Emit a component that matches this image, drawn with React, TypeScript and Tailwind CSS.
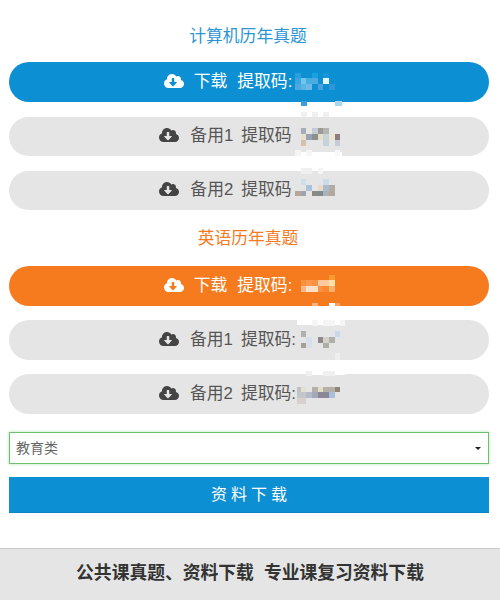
import { FaCloudDownloadAlt } from "react-icons/fa";

const font = { fontFamily: '"Liberation Sans", "Noto Sans CJK SC", sans-serif' };

// x, y, width, height, colour of each blurred block covering the codes
type Cell = [number, number, number, number, string];

const cells: Cell[] = [
    // blue row code
    [295, 73, 6, 5, "#2a9ddd"], [312, 73, 6, 5, "#18a0e0"], [323, 73, 6, 5, "#1597d8"],
    [295, 78, 6, 6, "#3aa5e0"], [301, 78, 5, 6, "#6fc5ee"], [306, 78, 6, 6, "#45aee3"], [312, 78, 6, 6, "#4eaadf"], [323, 78, 6, 6, "#e6f6fc"],
    [295, 84, 6, 6, "#4fa9e0"], [301, 84, 5, 6, "#5bb3e5"], [306, 84, 6, 6, "#6db9e6"], [318, 84, 5, 6, "#4aa0dc"], [329, 84, 6, 6, "#2f96d8"],
    [301, 101, 6, 5, "#3a9fde"], [335, 101, 7, 5, "#a8d8f0"],
    // spare 1
    [295, 113, 47, 4, "#ffffff"],
    [301, 112, 6, 5, "#f0f0f0"], [312, 112, 6, 5, "#f0f0f0"], [323, 112, 6, 5, "#f0f0f0"],
    [301, 128, 5, 6, "#a8adb5"], [312, 128, 6, 6, "#c3cbd3"], [318, 128, 5, 6, "#9a9a98"], [323, 128, 6, 6, "#b5b5b0"],
    [301, 134, 5, 6, "#e8dfcc"], [306, 134, 6, 6, "#95a3b5"], [312, 134, 6, 6, "#8e8e8e"], [318, 134, 5, 6, "#e5dfc8"], [323, 134, 6, 6, "#c5d3dd"], [329, 134, 6, 6, "#ece3d3"], [335, 134, 5, 6, "#8c7e80"],
    [301, 140, 5, 6, "#d3c3ae"], [323, 140, 6, 6, "#c5d3dd"], [335, 140, 5, 6, "#c5ccd5"],
    [295, 152, 47, 5, "#ffffff"],
    [295, 150, 6, 6, "#f5f5f5"], [306, 150, 6, 6, "#f5f5f5"], [335, 150, 5, 6, "#f8f8f8"],
    // spare 2
    [295, 168, 47, 3, "#ffffff"],
    [301, 168, 5, 6, "#f0f0f0"], [306, 168, 6, 6, "#f0f0f0"], [318, 168, 5, 6, "#f5f5f5"],
    [301, 179, 5, 6, "#cfdfea"], [323, 179, 6, 6, "#c8dcea"],
    [306, 185, 6, 6, "#abc3d8"], [318, 185, 5, 6, "#ead9c3"], [323, 185, 6, 6, "#a8bccd"], [329, 185, 6, 6, "#b3aba6"],
    [295, 191, 6, 5, "#b5a69a"], [301, 191, 5, 5, "#a3a3ad"], [312, 191, 6, 5, "#8a8a84"], [318, 191, 5, 5, "#7f8a8e"], [323, 191, 6, 5, "#a8b3bb"], [329, 191, 6, 5, "#b5a69e"],
    // orange row code
    [329, 275, 6, 5, "#f99a30"],
    [301, 280, 5, 6, "#f99040"], [306, 280, 6, 6, "#fa9a50"], [312, 280, 6, 6, "#fa9040"], [318, 280, 11, 6, "#fcc8a0"], [329, 280, 6, 6, "#fde0a8"],
    [301, 286, 5, 6, "#fbb88c"], [306, 286, 12, 6, "#fde0c8"], [318, 286, 5, 6, "#fa9040"], [323, 286, 6, 6, "#f98a30"], [329, 286, 6, 6, "#fbb070"],
    [312, 303, 6, 3, "#fbb080"], [329, 303, 6, 3, "#ffffff"], [335, 303, 5, 3, "#fba060"],
    // spare 1
    [297, 320, 48, 5, "#ffffff"],
    [312, 320, 6, 6, "#f5f5f5"], [323, 320, 12, 6, "#f5f5f5"], [340, 320, 5, 6, "#f5f5f5"],
    [301, 331, 5, 6, "#b0b0ae"], [335, 331, 5, 6, "#c8d8e8"],
    [306, 337, 6, 6, "#d5e0ea"], [318, 337, 5, 6, "#8f8890"], [323, 337, 6, 6, "#d5d0c8"], [329, 337, 6, 6, "#aeaeaa"],
    [301, 343, 5, 5, "#a89e96"], [306, 343, 6, 5, "#d5e0ea"], [323, 343, 6, 5, "#aeaea8"],
    // spare 2
    [335, 353, 5, 7, "#eeeeee"],
    [307, 372, 38, 3, "#ffffff"],
    [306, 371, 6, 5, "#f0f0f0"], [323, 371, 12, 5, "#f0f0f0"],
    [297, 387, 4, 5, "#c0c0c0"], [301, 387, 5, 5, "#e5e0d5"], [312, 387, 6, 5, "#b5b0a8"], [318, 387, 5, 5, "#e0ddc8"], [323, 387, 12, 5, "#b5b0a8"], [335, 387, 5, 5, "#8f8478"],
    [297, 392, 9, 6, "#c5c5cc"], [306, 392, 6, 6, "#b5bac8"], [312, 392, 6, 6, "#a5a8b8"], [318, 392, 11, 6, "#8a8898"], [329, 392, 6, 6, "#a8c0d8"],
    [297, 398, 9, 6, "#d8d0cc"],
];

function LinkRow({ label, colon, spacer, primary, short }: { label: string; colon?: boolean; spacer: string; primary?: string; short?: boolean }) {
    return (
        <a className={`flex items-center justify-center rounded-[20px] text-[16.8px] ${short ? "h-[39px]" : "h-10"} ${primary ?? "bg-[#e5e5e5] text-[#555]"}`}>
            <FaCloudDownloadAlt className={`mb-[3px] text-[20px] ${primary ? "mr-[10px]" : "mr-[11px] text-[#444]"}`} />
            <span className={`mb-px ${primary ? "mr-[10px]" : "mr-[8px]"}`}>{label}</span>
            <span className="mb-px">提取码{colon ? ":" : ""}</span>
            <span className={spacer} />
        </a>
    );
}

export default function App() {
    return (
        <div className="relative flex h-[600px] flex-col bg-white" style={font}>
            <div className="flex flex-col pl-[9px] pr-[11px]">
                <h2 className="mt-[26px] mb-[14px] pr-[2px] text-center text-[16.8px] leading-[22px] text-[#2b95d6]">计算机历年真题</h2>
                <div className="flex flex-col gap-[15px]">
                    <LinkRow label="下载" colon spacer="w-[42px]" primary="bg-[#0d8fd3] text-white" />
                    <LinkRow label="备用1" spacer="w-[47px]" short />
                    <LinkRow label="备用2" spacer="w-[47px]" short />
                </div>
                <h2 className="mt-[18px] mb-[16px] pr-[2px] text-center text-[16.8px] leading-[22px] text-[#f67b1f]">英语历年真题</h2>
                <div className="flex flex-col gap-[14px]">
                    <LinkRow label="下载" colon spacer="w-[42px]" primary="bg-[#f67b1f] text-white" />
                    <LinkRow label="备用1" colon spacer="w-[43px]" />
                    <LinkRow label="备用2" colon spacer="w-[43px]" />
                </div>
                <div className="mt-[18px] flex h-8 items-center justify-between border border-[#6cc26c] pl-[6px] pr-[7px] text-sm text-[#666] shadow-[0_0_3px_rgba(108,194,108,0.5)]">
                    <span>教育类</span>
                    <span className="h-0 w-0 border-x-[3px] border-t-[3px] border-x-transparent border-t-[#222]" />
                </div>
                <button className="mt-[13px] h-9 border-b border-[#0a86c8] bg-[#0d8fd3] pl-1 text-base tracking-[4px] text-white">资料下载</button>
            </div>
            <div className="mt-auto flex h-[52px] items-center justify-center gap-[10px] border-t border-[#ccc] bg-[#e5e5e5] pb-[2px] text-[17.8px] font-bold text-[#333]">
                <span>公共课真题、资料下载</span>
                <span>专业课复习资料下载</span>
            </div>
            {cells.map(([x, y, w, h, c], i) => (
                <div key={i} className="absolute blur-[0.4px]" style={{ left: x, top: y, width: w, height: h, background: c }} />
            ))}
        </div>
    );
}
